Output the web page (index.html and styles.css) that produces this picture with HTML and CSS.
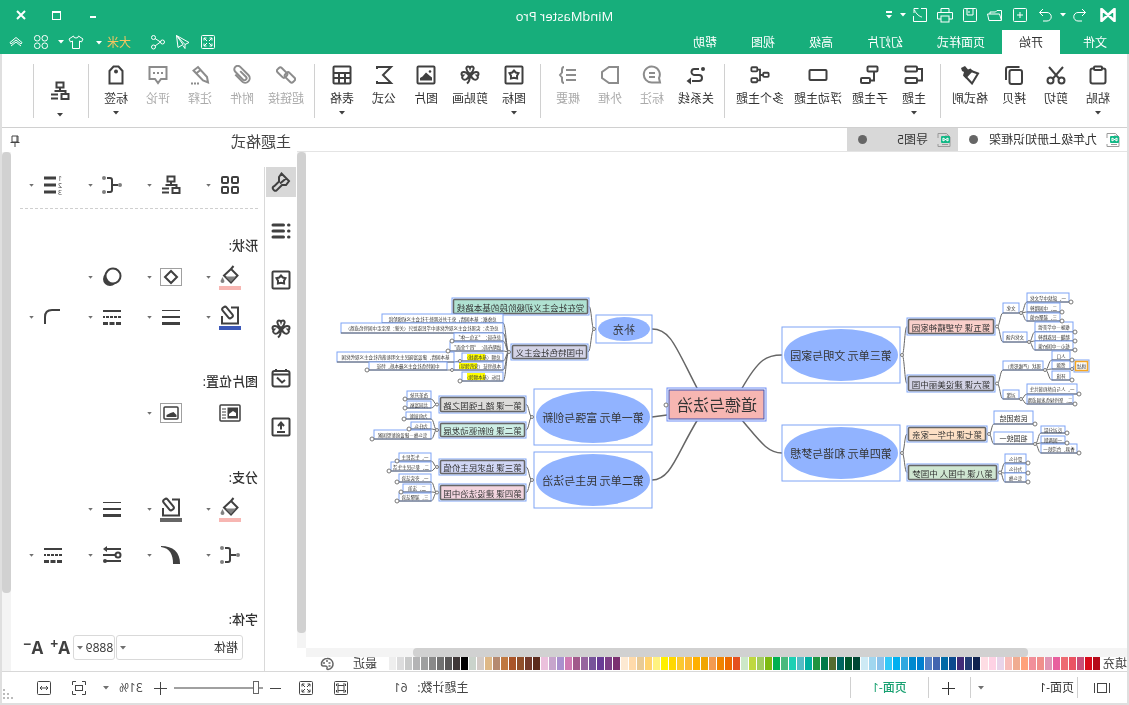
FILE: index.html
```html
<!DOCTYPE html>
<html lang="zh-CN">
<head>
<meta charset="utf-8">
<title>MindMaster Pro</title>
<link rel="stylesheet" href="styles.css">
</head>
<body>
<svg class="sprite" aria-hidden="true">
  <symbol id="caret" viewBox="0 0 6 4"><path class="f" d="M0 0h6L3 3.500z"/></symbol>
  <symbol id="logo" viewBox="0 0 16 14"><path d="M1.500 1v12M14.500 1v12M2 1.500l12 11M14 1.500l-12 11" stroke-width="2.600" stroke-linecap="round"/></symbol>
  <symbol id="undo" viewBox="0 0 16 16"><path d="M6 2 2.500 5.500 6 9M2.500 5.500H10a4 4 0 0 1 0 8.500H6"/></symbol>
  <symbol id="redo" viewBox="0 0 16 16"><path d="m10 2 3.500 3.500L10 9M13.500 5.500H6A4 4 0 0 0 6 14h4"/></symbol>
  <symbol id="new" viewBox="0 0 16 16"><rect x="1.500" y="1.500" width="13" height="13" rx="1"/><path d="M8 5v6M5 8h6"/></symbol>
  <symbol id="open" viewBox="0 0 16 16"><path d="M1.500 13V3.500H6L7.500 5H13v2M1.500 13.500 3.500 7h12l-1.500 6.500z"/></symbol>
  <symbol id="save" viewBox="0 0 16 16"><rect x="1.500" y="1.500" width="13" height="13" rx="1"/><path d="M5 2v6h6V2M9 4v2"/></symbol>
  <symbol id="print" viewBox="0 0 16 16"><path d="M4 5V1.500h8V5M4 12H.5V5.500h15V12H12"/><rect x="4" y="9" width="8" height="6"/></symbol>
  <symbol id="export" viewBox="0 0 16 16"><path d="M7 1.500H1.500v13h13V9M6 10c2 0 6-3 7.500-7M9.500 1.500h4.500v4.500"/></symbol>
  <symbol id="overflow" viewBox="0 0 6 8"><path class="f" d="M0 0h6v2H0zM0 4h6L3 7.500z"/></symbol>
  <symbol id="expand" viewBox="0 0 16 16"><rect x="1.500" y="1.500" width="13" height="13" rx="1"/><path d="M4 6.500V4h2.500M4 4l3 3M9.500 4H12v2.500M12 4 9 7M4 9.500V12h2.500M4 12l3-3M9.500 12H12V9.500M12 12 9 9"/></symbol>
  <symbol id="send" viewBox="0 0 16 16"><path d="M14.500 1.500 2 8.500l4 2zM14.500 1.500 13 13.500l-5-3zM6 10.500v4l2-3"/></symbol>
  <symbol id="share" viewBox="0 0 16 16"><circle cx="12.500" cy="3.500" r="2"/><circle cx="12.500" cy="13" r="2"/><circle cx="3.500" cy="8" r="2"/><path d="m5.500 8 5.500 4M5.500 8 11 4.500"/></symbol>
  <symbol id="shirt" viewBox="0 0 16 16"><path d="M5.500 2 1 5l1.500 3L4.500 7v7.500h7V7l2 1L15 5l-4.500-3a2.500 2 0 0 1-5 0z"/></symbol>
  <symbol id="clover4" viewBox="0 0 16 16"><rect x="1.500" y="1.500" width="5.500" height="5.500" rx="2.500"/><rect x="9" y="1.500" width="5.500" height="5.500" rx="2.500"/><rect x="1.500" y="9" width="5.500" height="5.500" rx="2.500"/><rect x="9" y="9" width="5.500" height="5.500" rx="2.500"/></symbol>
  <symbol id="up2" viewBox="0 0 16 16"><path d="m2 8.500 6-5 6 5-1 1.500-5-4-5 4zM3 12l5-4 5 4"/></symbol>

  <symbol id="paste" viewBox="0 0 20 20"><rect x="2.500" y="3.500" width="15" height="15" rx="2"/><rect x="6" y="1.500" width="8" height="3.500" rx="1" fill="#fff"/></symbol>
  <symbol id="cut" viewBox="0 0 20 20"><path d="m3 2 10.500 12M17 2 6.500 14"/><circle cx="4.500" cy="15.500" r="3"/><circle cx="15.500" cy="15.500" r="3"/></symbol>
  <symbol id="copy" viewBox="0 0 20 20"><rect x="2" y="5" width="12.500" height="14" rx="2"/><path d="M4.500 2H16a2 2 0 0 1 2 2v11"/></symbol>
  <symbol id="brush" viewBox="0 0 20 20"><path d="M2 8.500 9 6l6 5-7 7.500z"/><path class="f" d="M7 6 9.500 3.500l2.500 1L15 1l4 2-1 3-2 1 1 3.500-3 3z"/></symbol>
  <symbol id="topic" viewBox="0 0 20 20"><rect x="7" y="1.500" width="11.500" height="5" rx="1"/><rect x="7" y="13" width="11.500" height="5" rx="1"/><path d="M7 4H2v11.500h5"/></symbol>
  <symbol id="subtopic" viewBox="0 0 20 20"><rect x="2.500" y="1.500" width="10" height="5" rx="1"/><rect x="10" y="13" width="9" height="5" rx="1"/><path d="M6 6.500v9h4"/></symbol>
  <symbol id="float" viewBox="0 0 20 20"><rect x="1.500" y="5" width="17" height="10" rx="1"/></symbol>
  <symbol id="multi" viewBox="0 0 22 20"><rect x="14" y="1.500" width="6.500" height="4.500" rx="1"/><rect x="14" y="13.500" width="6.500" height="4.500" rx="1"/><rect x="1.500" y="7.500" width="6" height="4.500" rx="1"/><path d="M7.500 10h3M14 4h-3v12h3"/></symbol>
  <symbol id="relation" viewBox="0 0 20 20"><path d="M13 4H9a3 3 0 0 0-1 6h5a3 3 0 0 1 0 6H6" transform="matrix(-1 0 0 1 20 0)"/><circle class="f" cx="3" cy="4" r="2"/><path class="f" d="m15 12.500 4.500 3.500-4.500 3.500z"/></symbol>
  <symbol id="callout" viewBox="0 0 20 20"><path d="M2 17.500h8a8 8 0 1 0-7-4.500zM7 8h6M7 12h6"/></symbol>
  <symbol id="boundary" viewBox="0 0 20 20"><path d="M2 2h9l7 5v6l-7 5H2z"/></symbol>
  <symbol id="summary" viewBox="0 0 20 20"><path d="M2 5h10M2 10h10M2 15h10M14 2q2 0 2 3v2.500l2 2.500-2 2.500V15q0 3-2 3"/></symbol>
  <symbol id="star" viewBox="0 0 20 20"><rect x="1.500" y="1.500" width="17" height="17" rx="1"/><path d="m10 5.500 1.800 2 2.700.7-1.500 2.600.1 2.700-3.100-.7-3.100.7.1-2.700L5.500 8.200l2.700-.7z"/></symbol>
  <symbol id="clip-art" viewBox="0 0 20 20"><path d="M10 9C5 5 6 1.500 8 1.500q1.500 0 2 1.500.5-1.500 2-1.500C14 1.500 15 5 10 9zM9 10.500C5 5 1.500 7 1.500 9q0 1.500 1.500 1.500-1.500 1.500-.5 3C4.500 16 8 14.500 9 10.500zM11 10.500c4-5.500 7.500-3.500 7.500-1.500q0 1.500-1.500 1.500 1.500 1.500.5 3C15.500 16 12 14.500 11 10.500zM10 10q0 6 3 8.500"/></symbol>
  <symbol id="image" viewBox="0 0 20 20"><rect x="1.500" y="1.500" width="17" height="17" rx="1"/><path class="f" d="M4 15.500v-3l2-1.500 4-3.500 3.500 4 2.500 1.500v2.500z"/><circle class="f" cx="6" cy="6.500" r="1.300"/></symbol>
  <symbol id="sigma" viewBox="0 0 20 20"><path d="M17 4V2H3l8 8-8 8h14v-2"/></symbol>
  <symbol id="table" viewBox="0 0 20 20"><rect x="1.500" y="1.500" width="17" height="17" rx="1"/><path d="M2 8h16M2 13h16M7 8v10M13 8v10"/></symbol>
  <symbol id="link" viewBox="0 0 20 20"><g transform="rotate(-45 10 10)"><rect x="0" y="6" width="11" height="6" rx="2"/><rect x="9" y="8" width="11" height="6" rx="2"/></g></symbol>
  <symbol id="clip" viewBox="0 0 20 20"><path transform="rotate(45 10 10)" d="M14.500 5v9.500a4.500 4.500 0 0 1-9 0V3a3.500 3.500 0 0 1 7 0v11a2 2 0 0 1-4 0V6"/></symbol>
  <symbol id="pencil" viewBox="0 0 20 20"><path d="M2 17.500 3 12l9-10 4.500 3.500-9.500 10zM9.500 5 14 8.500"/><path d="M11 18.500h8" stroke-dasharray="2 1"/></symbol>
  <symbol id="comment" viewBox="0 0 20 20"><path d="M1.500 2h17v12H13l-3 4-3-4H1.500zM5 8h2M9 8h2M13 8h2"/></symbol>
  <symbol id="tag" viewBox="0 0 20 20"><path d="M3.500 18.500V6L7.500 1.500h5L16.500 6v12.500z"/><circle class="f" cx="10" cy="6.500" r="2"/></symbol>
  <symbol id="structure" viewBox="0 0 20 20"><rect x="6.500" y="1.500" width="7" height="5"/><path d="M10 6.500v3.500M4.500 13v-3h11"/><rect x="1.500" y="13" width="7" height="5"/><path d="M12 13.500h7M12 17.500h7"/></symbol>

  <symbol id="doc" viewBox="0 0 14 14"><path d="M13 5V.5H4.500L1 4v9.500h12V11M3 11.500h6M3 3h3" stroke="#999"/><rect x="1" y="3" width="9" height="7" rx="1" fill="#12b886" stroke="none"/><path d="M3 8V5l5 3V5L3 8" stroke="#fff"/></symbol>
  <symbol id="pin" viewBox="0 0 12 12"><path d="M3 1h6v6H3zM1.500 7.500h9M6 7.500V12M4 1v6"/></symbol>
  <symbol id="paint" viewBox="0 0 20 20"><path d="M9.500 1.500 2 9l3 4h4l5.500 5.500q2.500 1 3.500-1.500 1-2-1.500-3L12 9.500V5zM5 6.500l6 5"/></symbol>
  <symbol id="list" viewBox="0 0 20 20"><path d="M7.500 4H18M7.500 10H18M7.500 16H18" stroke-width="3" stroke-linecap="round"/><path d="M2 4h.5M2 10h.5M2 16h.5" stroke-width="3" stroke-linecap="round"/></symbol>
  <symbol id="calendar" viewBox="0 0 20 20"><rect x="1.500" y="3" width="17" height="15.500" rx="2"/><path d="M1.500 6.500h17M5 1v3M15 1v3M14 9.500l-5 5-3-2.500"/></symbol>
  <symbol id="upload" viewBox="0 0 20 20"><rect x="1.500" y="1.500" width="17" height="17" rx="1"/><path d="M6 15h8M10 12.500V6M7 9l3-3.500L13 9"/></symbol>
  <symbol id="grid4" viewBox="0 0 20 20"><rect x="2" y="2" width="6" height="6" rx="1"/><rect x="12" y="2" width="6" height="6" rx="1"/><rect x="2" y="12" width="6" height="6" rx="1"/><rect x="12" y="12" width="6" height="6" rx="1"/></symbol>
  <symbol id="branch" viewBox="0 0 20 20"><path d="M15 3h-3q-2 0-2 2v10q0 2 2 2h3M4 10h6"/><g class="dots"><circle cx="2" cy="10" r="2"/><circle cx="18" cy="3" r="2"/><circle cx="18" cy="17" r="2"/></g></symbol>
  <symbol id="bucket" viewBox="0 0 20 20"><path d="m9 4 7 6.500-7 7-6.500-7L9 4 6.500 1"/><path class="dots" d="M4 11.500h10.500L9 17zM17.500 12l2 4a2 2 0 1 1-4 0z"/></symbol>
  <symbol id="outline" viewBox="0 0 20 20"><path d="M9 2.500H2v16h16V11"/><rect x="10" y="1" width="5" height="13" rx="2" transform="rotate(40 12.500 7.500)"/></symbol>
  <symbol id="shape" viewBox="0 0 22 18"><rect x=".5" y=".5" width="21" height="17" stroke-width="1" stroke-dasharray="1 1"/><path d="m11 3 6 6-6 6-6-6z"/></symbol>
  <symbol id="shadow" viewBox="0 0 20 20"><circle class="f" cx="12" cy="12" r="7"/><circle cx="9" cy="9" r="7.500" fill="#fff"/></symbol>
  <symbol id="lines" viewBox="0 0 20 20"><path d="M1 3.500h18" stroke-width="1"/><path d="M1 10h18"/><path d="M1 16.500h18" stroke-width="3"/></symbol>
  <symbol id="dashes" viewBox="0 0 20 20"><path d="M1 4h18"/><path d="M1 10h18" stroke-dasharray="3 1"/><path d="M1 16.500h18" stroke-width="3" stroke-dasharray="5 1.500"/></symbol>
  <symbol id="corner" viewBox="0 0 20 20"><path d="M3 3h8q7 0 7 7v7"/></symbol>
  <symbol id="img-side" viewBox="0 0 22 18"><rect x="1" y="1" width="20" height="16" rx="1" stroke-width="1.500"/><path d="M15 5h4M15 8h4M15 11h4M15 14h4" stroke-width="1"/><path class="f" d="M3 3.500h10.500v11H3z"/><path d="M5 12V9l3-2 4 3v2z" fill="#fff" stroke="none"/></symbol>
  <symbol id="img-frame" viewBox="0 0 22 20"><rect x=".5" y=".5" width="21" height="19" stroke-width="1" stroke-dasharray="1 1"/><rect x="4" y="4" width="14" height="12" rx="1" stroke-width="1.500"/><path class="f" d="M5.500 14v-2l3-3 3 1 4 2v2z"/></symbol>
  <symbol id="taper" viewBox="0 0 20 20"><path class="f" d="M20 1C8 1 1 7 1 19h7C8 10 11 3 20 2z"/></symbol>
  <symbol id="ends" viewBox="0 0 20 20"><path d="M1 4h15M1 10h18M1 16h15"/><circle cx="4" cy="10" r="2.500" fill="#fff"/><path class="f" d="m15 1 4 3-4 3z"/><circle class="f" cx="17" cy="16" r="2"/></symbol>

  <symbol id="palette" viewBox="0 0 14 14"><path d="M7 1.500a5.500 5.500 0 0 0-1 11q1.500 0 1-1.500-.5-2 2-2h2q1.500 0 1.500-2A5.500 5.500 0 0 0 7 1.500z" stroke-width="1.500"/><path d="M3.500 6h2M6 4h2M9 6h2M3.500 9h2" stroke-width="1.500"/></symbol>
  <symbol id="views" viewBox="0 0 16 12"><rect x="3.500" y="1.500" width="9" height="9"/><path d="M.5 1v10M15.500 1v10"/></symbol>
  <symbol id="plus" viewBox="0 0 16 16"><path d="M8.500 2v13M2 8.500h13"/></symbol>
  <symbol id="minus" viewBox="0 0 16 16"><path d="M3 8.500h11"/></symbol>
  <symbol id="fit" viewBox="0 0 16 16"><rect x="1.500" y="1.500" width="13" height="13" rx="1"/><rect x="5" y="5.500" width="6" height="5"/><path d="M3.500 6V4H6M10 4h2.500v2M3.500 10v2H6M10 12h2.500v-2"/></symbol>
  <symbol id="frame" viewBox="0 0 16 16"><path d="M1.500 5V1.500H5M11 1.500h3.500V5M1.500 11v3.500H5M11 14.500h3.500V11"/><rect x="4.500" y="5.500" width="7" height="5"/></symbol>
  <symbol id="fit-width" viewBox="0 0 16 16"><rect x="1.500" y="1.500" width="13" height="13" rx="1"/><path d="M4 8h8M6 6 4 8l2 2M10 6l2 2-2 2"/></symbol>
  <symbol id="grip" viewBox="0 0 12 12"><path class="f" d="M9 1h2v2H9zM5 5h2v2H5zM9 5h2v2H9zM1 9h2v2H1zM5 9h2v2H5zM9 9h2v2H9z"/></symbol>
</svg>

<div class="app">
  <header class="titlebar">
    <div class="quick">
      <svg class="logo"><use href="#logo"/></svg>
      <button aria-label="撤销"><svg><use href="#undo"/></svg></button><button class="drop" aria-label="更多"><svg class="c"><use href="#caret"/></svg></button>
      <button aria-label="重做"><svg><use href="#redo"/></svg></button>
      <button aria-label="新建"><svg><use href="#new"/></svg></button>
      <button aria-label="打开"><svg><use href="#open"/></svg></button>
      <button aria-label="保存"><svg><use href="#save"/></svg></button>
      <button aria-label="打印"><svg><use href="#print"/></svg></button>
      <button aria-label="导出"><svg><use href="#export"/></svg></button><button class="drop" aria-label="导出选项"><svg class="c"><use href="#caret"/></svg></button>
      <button class="drop wide" aria-label="自定义"><svg class="tall"><use href="#overflow"/></svg></button>
    </div>
    <h1>MindMaster Pro</h1>
    <div class="window-buttons">
      <button aria-label="最小化"><i class="min"></i></button>
      <button aria-label="最大化"><i class="max"></i></button>
      <button aria-label="关闭"><svg viewBox="0 0 10 10"><path d="m1 1 8 8M9 1 1 9"/></svg></button>
    </div>
  </header>
  <nav class="menubar">
    <button class="file">文件</button>
    <button class="active">开始</button>
    <button>页面样式</button>
    <button>幻灯片</button>
    <button>高级</button>
    <button>视图</button>
    <button>帮助</button>
    <div class="account">
      <button class="ib" aria-label="全屏"><svg><use href="#expand"/></svg></button>
      <button class="ib" aria-label="发送"><svg><use href="#send"/></svg></button>
      <button class="ib" aria-label="分享"><svg><use href="#share"/></svg></button>
      <button class="user">大米<svg class="c"><use href="#caret"/></svg></button>
      <button class="ib skin" aria-label="皮肤"><svg><use href="#shirt"/></svg><svg class="c"><use href="#caret"/></svg></button>
      <button class="ib" aria-label="应用"><svg><use href="#clover4"/></svg></button>
      <button class="ib" aria-label="收起"><svg><use href="#up2"/></svg></button>
    </div>
  </nav>

  <div class="frame">
    <div class="ribbon">
      <button><svg><use href="#paste"/></svg>粘贴<svg class="c"><use href="#caret"/></svg></button>
      <button><svg><use href="#cut"/></svg>剪切</button>
      <button><svg><use href="#copy"/></svg>拷贝</button>
      <button><svg><use href="#brush"/></svg>格式刷</button>
      <hr>
      <button><svg><use href="#topic"/></svg>主题<svg class="c"><use href="#caret"/></svg></button>
      <button><svg><use href="#subtopic"/></svg>子主题</button>
      <button><svg><use href="#float"/></svg>浮动主题</button>
      <button><svg><use href="#multi"/></svg>多个主题</button>
      <hr>
      <button><svg><use href="#relation"/></svg>关系线</button>
      <button class="off"><svg><use href="#callout"/></svg>标注</button>
      <button class="off"><svg><use href="#boundary"/></svg>外框</button>
      <button class="off"><svg><use href="#summary"/></svg>概要</button>
      <hr>
      <button><svg><use href="#star"/></svg>图标<svg class="c"><use href="#caret"/></svg></button>
      <button><svg><use href="#clip-art"/></svg>剪贴画</button>
      <button><svg><use href="#image"/></svg>图片</button>
      <button><svg><use href="#sigma"/></svg>公式</button>
      <button><svg><use href="#table"/></svg>表格<svg class="c"><use href="#caret"/></svg></button>
      <hr>
      <button class="off"><svg><use href="#link"/></svg>超链接</button>
      <button class="off"><svg><use href="#clip"/></svg>附件</button>
      <button class="off"><svg><use href="#pencil"/></svg>注释</button>
      <button class="off"><svg><use href="#comment"/></svg>评论</button>
      <button><svg><use href="#tag"/></svg>标签<svg class="c"><use href="#caret"/></svg></button>
      <hr>
      <button class="layout" aria-label="布局"><svg><use href="#structure"/></svg><svg class="c"><use href="#caret"/></svg></button>
      <hr>
    </div>

    <main class="main">
      <section class="editor">
        <div class="docs">
          <button class="doc"><svg><use href="#doc"/></svg><span>九年级上册知识框架</span><i></i></button>
          <button class="doc idle"><svg><use href="#doc"/></svg><span>导图5</span><i></i></button>
        </div>
        <div class="stage">
          <svg id="map" class="map" viewBox="4 304 1642 992"></svg>
          <div class="vbar"><i></i></div>
        </div>
        <div class="hbar"><i></i></div>
        <div class="colors"><span>填充</span><div id="swatches" class="swatches"></div><span class="recent">最近</span><svg><use href="#palette"/></svg></div>
      </section>

      <aside class="panel">
        <div class="panel-head"><h2>主题格式</h2><button aria-label="固定"><svg><use href="#pin"/></svg></button></div>
        <div class="panel-main">
          <div class="tabs">
            <button class="on" aria-label="格式"><svg><use href="#paint"/></svg></button>
            <button aria-label="大纲"><svg><use href="#list"/></svg></button>
            <button aria-label="图标"><svg><use href="#star"/></svg></button>
            <button aria-label="剪贴画"><svg><use href="#clip-art"/></svg></button>
            <button aria-label="任务"><svg><use href="#calendar"/></svg></button>
            <button aria-label="上传"><svg><use href="#upload"/></svg></button>
          </div>
          <div class="options">
            <div class="tools first">
              <button aria-label="样式"><svg><use href="#grid4"/></svg><svg class="c"><use href="#caret"/></svg></button>
              <button aria-label="布局"><svg><use href="#structure"/></svg><svg class="c"><use href="#caret"/></svg></button>
              <button aria-label="连接"><svg><use href="#branch"/></svg><svg class="c"><use href="#caret"/></svg></button>
              <button aria-label="编号"><svg viewBox="0 0 20 20"><path d="M7 3h12M7 10h12M7 17h12" stroke-width="3"/><text x="1" y="6">1</text><text x="1" y="13">2</text><text x="1" y="20">3</text></svg><svg class="c"><use href="#caret"/></svg></button>
            </div>
            <section>
              <h3>形状:</h3>
              <div class="tools">
                <button class="fill" aria-label="填充"><svg><use href="#bucket"/></svg><svg class="c"><use href="#caret"/></svg></button>
                <button aria-label="形状"><svg><use href="#shape"/></svg><svg class="c"><use href="#caret"/></svg></button>
                <button aria-label="阴影"><svg><use href="#shadow"/></svg><svg class="c"><use href="#caret"/></svg></button>
              </div>
              <div class="tools">
                <button class="line" aria-label="线条"><svg><use href="#outline"/></svg><svg class="c"><use href="#caret"/></svg></button>
                <button aria-label="粗细"><svg><use href="#lines"/></svg><svg class="c"><use href="#caret"/></svg></button>
                <button aria-label="虚线"><svg><use href="#dashes"/></svg><svg class="c"><use href="#caret"/></svg></button>
                <button aria-label="圆角"><svg><use href="#corner"/></svg><svg class="c"><use href="#caret"/></svg></button>
              </div>
            </section>
            <section>
              <h3>图片位置:</h3>
              <div class="tools">
                <button aria-label="位置"><svg><use href="#img-side"/></svg></button>
                <button aria-label="图片框"><svg><use href="#img-frame"/></svg><svg class="c"><use href="#caret"/></svg></button>
              </div>
            </section>
            <section class="branches">
              <h3>分支:</h3>
              <div class="tools">
                <button class="fill" aria-label="分支填充"><svg><use href="#bucket"/></svg><svg class="c"><use href="#caret"/></svg></button>
                <button class="line gray" aria-label="分支线条"><svg><use href="#outline"/></svg><svg class="c"><use href="#caret"/></svg></button>
                <button aria-label="分支粗细"><svg><use href="#lines"/></svg><svg class="c"><use href="#caret"/></svg></button>
              </div>
              <div class="tools">
                <button aria-label="分支连接"><svg><use href="#branch"/></svg><svg class="c"><use href="#caret"/></svg></button>
                <button aria-label="渐细"><svg><use href="#taper"/></svg><svg class="c"><use href="#caret"/></svg></button>
                <button aria-label="箭头"><svg><use href="#ends"/></svg><svg class="c"><use href="#caret"/></svg></button>
                <button aria-label="分支虚线"><svg><use href="#dashes"/></svg><svg class="c"><use href="#caret"/></svg></button>
              </div>
            </section>
            <section>
              <h3>字体:</h3>
              <div class="font">
                <label class="pick family"><select aria-label="字体"><option>楷体</option></select><svg class="c"><use href="#caret"/></svg></label>
                <label class="pick size"><select aria-label="字号"><option>8889</option></select><svg class="c"><use href="#caret"/></svg></label>
                <button aria-label="增大字号">A<sup>+</sup></button>
                <button aria-label="减小字号">A<sup>−</sup></button>
              </div>
            </section>
          </div>
          <div class="vbar side"><i></i></div>
        </div>
      </aside>
    </main>

    <footer class="status">
      <button class="views" aria-label="视图"><svg><use href="#views"/></svg></button>
      <label class="page"><select aria-label="页面"><option>页面-1</option></select><svg class="c"><use href="#caret"/></svg></label>
      <button class="add" aria-label="添加页面"><svg><use href="#plus"/></svg></button>
      <button class="current">页面-1</button>
      <span class="count">主题计数:</span><span class="num">61</span>
      <button class="sq" aria-label="适合"><svg><use href="#fit"/></svg></button>
      <button class="sq" aria-label="全屏"><svg><use href="#expand"/></svg></button>
      <button class="step" aria-label="缩小"><svg><use href="#minus"/></svg></button>
      <input type="range" min="0" max="100" value="5" aria-label="缩放">
      <button class="step" aria-label="放大"><svg><use href="#plus"/></svg></button>
      <button class="zoom">31%<svg class="c"><use href="#caret"/></svg></button>
      <button class="sq" aria-label="适应页面"><svg><use href="#frame"/></svg></button>
      <button class="sq" aria-label="适应宽度"><svg><use href="#fit-width"/></svg></button>
      <svg class="grip"><use href="#grip"/></svg>
    </footer>
  </div>
</div>
<script src="map.js"></script>
</body>
</html>
```
FILE: styles.css
```css
* { box-sizing: border-box; }
html, body { height: 100%; margin: 0; overflow: hidden; }
body { font: 12px/16px "Open Sans", "Noto Sans CJK SC", sans-serif; color: #444; background: #fff; }
button, select, input { font: inherit; color: inherit; background: none; border: 0; padding: 0; margin: 0; }
button { display: flex; align-items: center; justify-content: center; white-space: nowrap; }
h1, h2, h3 { margin: 0; font-weight: 400; font-size: 13px; }
svg { fill: none; stroke: currentColor; stroke-width: 1; flex: none; display: block; }
.sprite { position: absolute; width: 0; height: 0; }
.f { fill: currentColor; stroke: none; }
.dots { fill: #808080; stroke: none; }
svg text { stroke: none; fill: currentColor; font: 7px "Open Sans", sans-serif; }
.app svg.c { width: 6px; height: 4px; }

/* the whole window is shown mirrored */
.app { height: 100%; display: flex; flex-direction: column; transform: scaleX(-1); }

.titlebar { height: 30px; display: grid; grid-template-columns: 1fr auto 1fr; align-items: center; background: #17ae7b; color: #fff; }
.titlebar h1 { padding-top: 2px; }
.quick { display: flex; align-items: center; padding-left: 13px; }
.quick .logo { width: 16px; height: 14px; margin-right: 7px; }
.quick button { width: 25px; height: 30px; }
.quick button svg { width: 16px; height: 16px; }
.quick .drop { width: 10px; }
.quick .drop.wide { width: 18px; }
.quick .drop svg.tall { width: 6px; height: 8px; }
.window-buttons { display: flex; justify-content: flex-end; padding-right: 3px; }
.window-buttons button { width: 36px; height: 28px; }
.window-buttons svg { width: 10px; height: 10px; stroke-width: 2; }
.min { width: 6px; height: 2px; margin-top: 4px; background: #fff; }
.max { width: 9px; height: 9px; border: 1px solid #fff; border-top-width: 2px; }

.menubar { height: 24px; display: flex; background: #17ae7b; color: #fff; }
.menubar > button { padding: 2px 17px 0; }
.menubar > .file { padding: 2px 23px 0 22px; }
.menubar > .active { background: #fff; color: #333; }
.account { display: flex; margin-left: auto; padding-right: 4px; }
.account .ib { width: 25px; }
.account svg { width: 16px; height: 16px; }
.account .user { color: #f5c55f; padding: 2px 8px 0 14px; gap: 5px; }
.account .user svg { color: #fff; }
.account .skin { width: 34px; gap: 4px; }

.frame { flex: 1; min-height: 0; display: flex; flex-direction: column; border: 2px solid #dfdfdf; border-top: 0; }
.ribbon { height: 74px; display: flex; padding-left: 8px; border-bottom: 1px solid #d0d0d0; color: #333; }
.ribbon button { flex-direction: column; justify-content: flex-start; min-width: 42px; padding: 11px 5px 0; }
.ribbon svg { width: 20px; height: 20px; stroke-width: 2; margin-bottom: 6px; color: #404040; }
.ribbon svg.c { margin: 4px 0 0; }
.ribbon .off { color: #aaa; }
.ribbon .off svg { color: #8c8c8c; }
.ribbon .layout { width: 46px; padding-top: 27px; }
.ribbon .layout svg.c { margin-top: 6px; }
.ribbon hr { width: 1px; height: 54px; margin: 10px 5px 0 6px; border: 0; background: #d0d0d0; }
.ribbon .layout + hr { margin-left: 3px; }

.main { flex: 1; min-height: 0; display: flex; }
.editor { flex: 1; min-width: 0; display: flex; flex-direction: column; }
.docs { height: 24px; display: flex; border-bottom: 1px solid #e4e4e4; color: #333; }
.doc { gap: 9px; padding: 0 11px 0 7px; }
.doc svg { width: 14px; height: 14px; }
.doc i { width: 9px; height: 9px; border-radius: 50%; background: #666; margin-left: 2px; }
.doc.idle { width: 111px; background: #d8d8d8; }
.doc.idle i { margin-left: auto; }
.stage { flex: 1; min-height: 0; display: flex; }
.map { flex: 1; min-width: 0; height: 100%; }
.vbar { width: 9px; background: #f4f4f4; }
.vbar i { display: block; height: 97%; border-radius: 4px; background: #d1d1d1; }
.vbar.side { margin-left: auto; }
.vbar.side i { height: 85%; }
.hbar { height: 9px; margin-right: 9px; background: #f4f4f4; display: flex; }
.hbar i { width: 75%; margin-left: 12%; border-radius: 4px; background: #d1d1d1; }
.colors { height: 14px; display: flex; align-items: center; overflow: hidden; white-space: nowrap; }
.colors > span { width: 27px; line-height: 14px; }
.colors .recent { width: 24px; margin: 0 19px 0 12px; }
.colors svg { width: 14px; height: 14px; color: #666; }
.swatches { display: flex; gap: 1px; height: 14px; }
.swatches i { width: 7px; height: 13px; }

.panel { width: 295px; display: flex; flex-direction: column; }
.panel-head { height: 24px; display: flex; align-items: center; justify-content: space-between; padding: 1px 7px 0 6px; }
.panel-head h2 { font-size: 15px; line-height: 20px; }
.panel-head svg { width: 12px; height: 12px; }
.panel-main { flex: 1; min-height: 0; display: flex; }
.tabs { margin-top: 15px; padding: 0 1px; border-right: 1px solid #d9d9d9; display: flex; flex-direction: column; gap: 19px; }
.tabs button { width: 30px; height: 30px; color: #404040; }
.tabs button.on { background: #d8d8d8; }
.tabs svg { width: 20px; height: 20px; stroke-width: 2; }
.options { width: 244px; padding: 17px 0 0 6px; color: #404040; }
.options section { margin-top: 38px; }
.options h3 { line-height: 20px; font-weight: 500; color: #333; margin-bottom: 6px; }
.first { padding-bottom: 7px; border-bottom: 1px dashed #cfcfcf; height: 40px; }
.options .first + section { margin-top: 26px; }
.tools { display: flex; padding-left: 13px; }
.tools + .tools { margin-top: 8px; }
.branches .tools + .tools { margin-top: 14px; }
.tools button { flex: none; width: 59px; height: 32px; justify-content: flex-start; padding-left: 4px; }
.tools svg { width: 22px; height: 20px; stroke-width: 2; }
.app .tools svg.c { width: 5px; height: 3px; color: #707070; margin-left: 8px; }
.tools .fill svg:first-child, .tools .line svg:first-child { box-sizing: content-box; height: 20px; padding-bottom: 1px; border-bottom: 4px solid #f7b6b2; }
.tools .line svg:first-child { border-color: #3c58b8; }
.tools .gray svg:first-child { border-color: #666; }
.font { display: flex; margin-left: 15px; }
.pick { height: 25px; display: flex; align-items: center; border: 1px solid #d9d9d9; border-radius: 3px; padding-right: 3px; color: #333; }
.pick select, .page select { appearance: none; flex: 1; min-width: 0; }
.pick.family { width: 128px; padding-left: 4px; margin-right: 1px; }
.pick.size { width: 42px; padding-left: 1px; }
.pick svg { color: #707070; }
.font button { width: 27px; font-size: 17px; font-weight: 700; }
.font sup { font-size: 14px; line-height: 8px; align-self: flex-start; margin-top: 5px; }

.status { height: 32px; display: flex; align-items: center; border-top: 1px solid #d8d8d8; }
.status button { height: 21px; }
.status svg { width: 16px; height: 16px; }
.status svg.c { color: #707070; }
.status .views { width: 50px; border-right: 1px solid #d0d0d0; }
.page { width: 107px; height: 21px; display: flex; align-items: center; padding: 0 7px 0 3px; border-right: 1px solid #d0d0d0; color: #333; }
.status .add { width: 42px; border-right: 1px solid #d0d0d0; color: #333; }
.status .current { width: 78px; border-right: 1px solid #d0d0d0; color: #17a070; font-weight: 500; }
.count { margin-left: auto; }
.num { margin: 0 35px 0 10px; }
.status .sq { width: 35px; }
.status .step { width: 22px; margin: 0 2px; }
.status input { appearance: none; width: 89px; height: 16px; }
.status input::-webkit-slider-runnable-track { height: 2px; background: #a0a0a0; }
.status input::-webkit-slider-thumb { appearance: none; width: 6px; height: 13px; margin-top: -6px; background: #fff; border: 1px solid #666; }
.status .zoom { gap: 10px; margin: 0 6px 0 5px; }
.status .grip { width: 12px; height: 12px; color: #bbb; margin: 12px 0 0 13px; }

/* mind map, drawn in half-pixel units */
.map .link { stroke: #666; stroke-width: 2; }
.map .trunk { stroke-width: 3; }
.map .sel { stroke: #7ea4f5; stroke-width: 2; }
.map .box { stroke: #666; stroke-width: 3; }
.map .oval { fill: #91b3ff; stroke: none; }
.map .knob { fill: #fff; stroke: #777; stroke-width: 2; }
.map .mark { fill: #ff0; stroke: none; }
.map .orange { stroke: #f5a623; stroke-width: 3; }
.map text { text-anchor: middle; dominant-baseline: central; fill: #333; font-family: "Noto Sans CJK SC", sans-serif; }
.map .t-root { font-size: 32px; }
.map .t-unit { font-size: 22px; }
.map .t-lesson { font-size: 17px; }
.map .t-mid { font-size: 14px; }
.map .t-leaf { font-size: 9px; }
```
FILE: map.js
```js
// id, kind, x, y, width, height, text, parent, extra (fill of a lesson, mark width of a leaf)
const nodes = [
  ['u3', 'unit', 229, 327, 118, 56, '第三单元 文明与家园', 'root'],
  ['u4', 'unit', 229, 425, 118, 56, '第四单元 和谐与梦想', 'root'],
  ['u0', 'unit', 477, 315, 56, 28, '补充', 'root'],
  ['u1', 'unit', 477, 389, 118, 56, '第一单元 富强与创新', 'root'],
  ['u2', 'unit', 477, 452, 118, 56, '第二单元 民主与法治', 'root'],
  ['l5', 'lesson', 134, 318, 88, 17, '第五课 守望精神家园', 'u3', '#f9cfca'],
  ['l6', 'lesson', 134, 375, 88, 17, '第六课 建设美丽中国', 'u3', '#d3d3e6'],
  ['l7', 'lesson', 142, 426, 80, 16, '第七课 中华一家亲', 'u4', '#fde0c5'],
  ['l8', 'lesson', 131, 464, 91, 17, '第八课 中国人 中国梦', 'u4', '#cfe6d1'],
  ['a', 'lesson', 540, 298, 137, 17, '党在社会主义初级阶段的基本路线', 'u0', '#b0e2d2'],
  ['b', 'lesson', 541, 344, 77, 16, '中国特色社会主义', 'u0', '#d3d3e6'],
  ['l1', 'lesson', 603, 396, 87, 17, '第一课 踏上强国之路', 'u1', '#dcdbd9'],
  ['l2', 'lesson', 603, 422, 87, 16, '第二课 创新驱动发展', 'u1', '#cdeee4'],
  ['l3', 'lesson', 603, 459, 87, 16, '第三课 追求民主价值', 'u2', '#d0d6f4'],
  ['l4', 'lesson', 603, 484, 87, 17, '第四课 建设法治中国', 'u2', '#f2d4de'],
  ['c1', 'leaf', 110, 303, 16, 10, '文化', 'l5'],
  ['', 'leaf', 60, 293, 42, 9, '一、延续中华文化', 'c1'],
  ['', 'leaf', 69, 303, 33, 9, '二、中国精神', 'c1'],
  ['', 'leaf', 69, 313, 33, 8, '三、凝聚价值', 'c1'],
  ['c2', 'leaf', 102, 332, 24, 10, '文化内涵', 'l5'],
  ['', 'leaf', 56, 322, 38, 10, '根脉—中华美德', 'c2'],
  ['', 'leaf', 56, 332, 38, 9, '精髓—民族精神', 'c2'],
  ['', 'leaf', 56, 341, 38, 9, '核心—中国价值', 'c2'],
  ['c3', 'leaf', 86, 361, 40, 9, '现状（严峻形势）', 'l6'],
  ['', 'leaf', 59, 351, 18, 9, '人口', 'c3'],
  ['c4', 'leaf', 59, 361, 18, 8, '资源', 'c3'],
  ['', 'leaf', 59, 371, 18, 9, '环境', 'c3'],
  ['', 'orange', 40, 360, 15, 12, '挑战', 'c4'],
  ['c5', 'leaf', 110, 390, 16, 9, '对策', 'l6'],
  ['', 'leaf', 52, 384, 50, 10, '一、人与自然和谐共生', 'c5'],
  ['', 'leaf', 56, 395, 46, 9, '二、坚持绿色发展道路', 'c5'],
  ['', 'mid', 96, 411, 39, 13, '民族团结', 'l7'],
  ['c6', 'mid', 96, 432, 39, 12, '祖国统一', 'l7'],
  ['', 'leaf', 64, 426, 24, 7, '反对分裂', 'c6'],
  ['', 'leaf', 64, 436, 24, 7, '一国两制', 'c6'],
  ['', 'leaf', 52, 444, 36, 9, '香港、台湾统一', 'c6'],
  ['', 'leaf', 103, 454, 21, 9, '是什么', 'l8'],
  ['', 'leaf', 103, 464, 21, 9, '为什么', 'l8'],
  ['', 'leaf', 103, 473, 21, 9, '怎么做', 'l8'],
  ['', 'leaf', 626, 314, 121, 9, '总依据：基本国情，处于并长期处于社会主义初级阶段', 'b'],
  ['', 'leaf', 626, 323, 162, 10, '总任务：实现社会主义现代化和中华民族复兴（关键：坚定走中国特色道路）', 'b'],
  ['', 'leaf', 626, 333, 49, 8, '总布局：“五位一体”', 'b'],
  ['', 'leaf', 626, 342, 53, 9, '战略布局：“四个全面”', 'b'],
  ['c7', 'leaf', 626, 353, 41, 8, '总纲（基本路线）', 'b', 18],
  ['c8', 'leaf', 626, 362, 49, 8, '本质特征（党的领导）', 'b', 18],
  ['', 'leaf', 626, 372, 41, 9, '目标（基本纲领）', 'b', 18],
  ['', 'leaf', 675, 352, 117, 10, '基本国情、建设富强民主文明和谐的社会主义现代化国', 'c7'],
  ['', 'leaf', 682, 362, 78, 8, '中国特色社会主义最本质、特征', 'c8'],
  ['', 'leaf', 698, 391, 24, 8, '改革开放', 'l1'],
  ['', 'leaf', 698, 401, 24, 7, '共同富裕', 'l1'],
  ['', 'leaf', 698, 412, 25, 7, '为何创新', 'l2'],
  ['', 'leaf', 698, 422, 20, 7, '为什么', 'l2'],
  ['', 'leaf', 698, 430, 57, 9, '怎么做—建设创新型国家', 'l2'],
  ['', 'leaf', 698, 453, 32, 8, '一、生活民主', 'l3'],
  ['', 'leaf', 698, 462, 40, 9, '二、参与民主生活', 'l3'],
  ['', 'leaf', 698, 474, 32, 8, '一、夯实法治', 'l4'],
  ['', 'leaf', 698, 484, 28, 8, '二、法治', 'l4'],
  ['', 'leaf', 698, 493, 32, 8, '三、凝聚法治', 'l4']
];

const NS = 'http://www.w3.org/2000/svg';
const map = document.getElementById('map');
const layers = [0, 1, 2].map(() => map.appendChild(document.createElementNS(NS, 'g')));

function draw(layer, name, attrs, text) {
  const el = document.createElementNS(NS, name);
  for (const key in attrs) {
    const v = attrs[key];
    el.setAttribute(key, typeof v === 'number' ? v * 2 : v);
  }
  if (text) el.textContent = text;
  layers[layer].appendChild(el);
}
function path(d, cls) {
  draw(0, 'path', { class: cls, d: d.replace(/-?[\d.]+/g, n => n * 2) });
}
const underlined = kind => kind === 'leaf' || kind === 'mid';

const byId = {};
nodes.forEach(n => { if (n[0]) byId[n[0]] = n; });
const joined = new Set();

nodes.forEach(([id, kind, x, y, w, h, text, parent, extra]) => {
  const left = x < 400;
  const cx = x + w / 2, cy = y + h / 2;
  const p = byId[parent];
  if (p) {
    const [, pk, px, py, pw, ph] = p;
    const sx = left ? px - 2 : px + pw + 2;
    const sy = underlined(pk) ? py + ph : py + ph / 2;
    const ex = left ? x + w : x;
    const ey = underlined(kind) ? y + h : cy;
    const mid = (sx + ex) / 2;
    path(`M${sx} ${sy}C${mid} ${sy} ${mid} ${ey} ${ex} ${ey}`, 'link');
    if (!joined.has(parent)) {
      joined.add(parent);
      draw(2, 'circle', { class: 'knob', cx: sx, cy: sy, r: 1.5 });
    }
  }
  if (kind === 'unit') {
    draw(1, 'rect', { class: 'sel', x, y, width: w, height: h });
    draw(1, 'ellipse', { class: 'oval', cx, cy, rx: w / 2 - 2, ry: h / 2 - 2 });
    draw(2, 'text', { class: 't-unit', x: cx, y: cy }, text);
  } else if (kind === 'lesson') {
    draw(1, 'rect', { class: 'sel', x, y, width: w, height: h });
    draw(1, 'rect', { class: 'box', x: x + 1.5, y: y + 1.5, width: w - 3, height: h - 3, rx: 1, fill: extra });
    draw(2, 'text', { class: 't-lesson', x: cx, y: cy }, text);
  } else {
    draw(1, 'rect', { class: 'sel', x, y, width: w, height: h, fill: '#fff' });
    if (kind === 'orange') {
      draw(1, 'rect', { class: 'orange', x: x + 1.5, y: y + 1.5, width: w - 3, height: h - 3 });
    } else {
      draw(1, 'path', { class: 'link', d: `M${x * 2} ${(y + h) * 2}h${w * 2}` });
    }
    if (extra) draw(1, 'rect', { class: 'mark', x: x + w - extra - 5, y: y + 1, width: extra, height: h - 2 });
    draw(2, 'text', { class: kind === 'mid' ? 't-mid' : 't-leaf', x: cx, y: cy }, text);
    if (!id && kind !== 'orange' && w < 115) {
      draw(2, 'circle', { class: 'knob', cx: left ? x - 2 : x + w + 2, cy: y + h, r: 2 });
    }
  }
});

// trunks from the central topic
path('M388 390C370 358 362 355 347 355', 'link trunk');
path('M388 419C370 440 362 453 347 453', 'link trunk');
path('M431 390C453 348 458 329 477 329', 'link trunk');
path('M462 415L477 417', 'link trunk');
path('M431 419C453 455 458 480 477 480', 'link trunk');
draw(1, 'rect', { x: 363, y: 388, width: 99, height: 33, fill: '#fff', stroke: '#6c8cf5', 'stroke-width': '2' });
draw(1, 'rect', { x: 365, y: 390, width: 95, height: 29, fill: '#f7b6b2', stroke: '#3a4fb0', 'stroke-width': '2' });
draw(2, 'text', { class: 't-root', x: 412, y: 404 }, '道德与法治');
draw(2, 'circle', { class: 'knob', cx: 463, cy: 405, r: 2 });

const palette = (
  'b50a19 d90a1b c9507a ea5363 ed6b72 e8609e e196b4 f08f8b f18f9a ffa17a f0ac91 f7bdb9 e8d4e9 fed2e4 fedde4 ' +
  '0f234f 223b73 412c78 0c4a8e 006aa6 4165b0 5580c4 0080d0 0089cf 2fa8e0 00b0f0 33c8f8 8bc2eb a0d6ef cdeaf5 ' +
  '004634 00552d 00655f 556b2f 007a47 20943f 00afa0 55bbc5 1cd0b4 48b97d 00b050 7fba11 a2cc60 bfd840 cce8c8 ' +
  'e4501f ed6a00 f08300 f39a50 f0a500 ffb000 fdb933 fbc82f ffd700 fff000 fff280 ffd26e e8ca95 ffdaaa fde9d2 ' +
  '7b3070 7d3f86 693c96 77549a 96659f a15a8b cf7bb2 aa91ce c7a5cc ebc0dc ' +
  '5c2b1c 743a2b 904f2b a95428 c07840 b58a70 deb887 d3cac6 cad3cb ' +
  '000000 3f3737 595757 717171 898989 9e9f9f b4b4b5 c9caca dcdcdd eeeeee').split(' ');
document.getElementById('swatches').append(...palette.map(c => {
  const i = document.createElement('i');
  i.style.background = '#' + c;
  return i;
}));
```
